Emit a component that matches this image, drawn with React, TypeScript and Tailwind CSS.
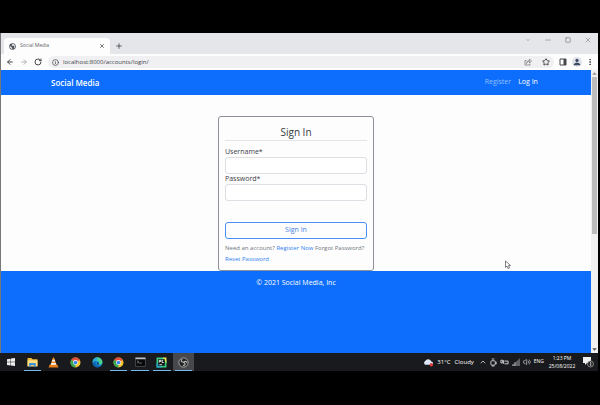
import type { ReactNode } from "react";
import { X, Plus, ArrowLeft, ArrowRight, RotateCw, Info, Star, Minus, Square, ChevronDown, ChevronUp, EllipsisVertical, Volume2 } from "lucide-react";

const font = "font-['Open_Sans','Noto_Sans',sans-serif]";

function IconButton({ label, className = "", children }: { label: string; className?: string; children: ReactNode }) {
  return (
    <button type="button" aria-label={label} className={`flex shrink-0 items-center justify-center ${className}`}>
      {children}
    </button>
  );
}

function Globe() {
  return (
    <svg viewBox="0 0 16 16" className="size-[7px] shrink-0">
      <circle cx="8" cy="8" r="7.5" fill="#50555b" />
      <path d="M2 7l4 2 1 3 1 2-3-1-3-3zM8 2l-2 3 3 2 2-1 2 3-2 2 1 2 2-4-1-5-3-2z" fill="#e8eaed" />
    </svg>
  );
}

function TabStrip() {
  return (
    <div className="flex h-[21px] items-end bg-[#e4e6ea] pl-[3px]">
      <div className="flex h-4 w-[106px] items-center gap-1 rounded-t bg-[#fdfdfd] pr-1 pl-[5px]">
        <Globe />
        <span className="flex-1 text-[5px] text-[#5f6368]">Social Media</span>
        <IconButton label="Close tab" className="size-2 text-[#45494d]"><X className="size-1.5" strokeWidth={3} /></IconButton>
      </div>
      <IconButton label="New tab" className="h-4 w-[18px] text-[#45494d]"><Plus className="size-2" strokeWidth={2.5} /></IconButton>
      <div className="ml-auto flex h-full items-start gap-3 pt-[3px] pr-[6px] text-[#85888c]">
        <IconButton label="Search tabs" className="size-2"><ChevronDown className="size-1.5" /></IconButton>
        <IconButton label="Minimize" className="size-2"><Minus className="size-2" /></IconButton>
        <IconButton label="Maximize" className="size-2"><Square className="size-1.5" strokeWidth={3} /></IconButton>
        <IconButton label="Close" className="size-2"><X className="size-2" strokeWidth={2} /></IconButton>
      </div>
    </div>
  );
}

function Toolbar() {
  return (
    <div className="flex h-4 items-center bg-[#fdfdfd] pr-1 pl-[5px] text-[#45494d]">
      <div className="flex gap-1.5">
        <IconButton label="Back" className="size-2"><ArrowLeft className="size-2" strokeWidth={3} /></IconButton>
        <IconButton label="Forward" className="size-2 text-[#a5a8ab]"><ArrowRight className="size-2" strokeWidth={2.5} /></IconButton>
        <IconButton label="Reload" className="size-2"><RotateCw className="size-2" strokeWidth={3} /></IconButton>
      </div>
      <div className="ml-[6px] flex h-3 min-w-0 flex-1 items-center gap-1 rounded-full bg-[#f0f0f2] px-1">
        <Info className="size-[7px] shrink-0" strokeWidth={2.5} />
        <input aria-label="Address" defaultValue="localhost:8000/accounts/login/" className="h-3 min-w-0 flex-1 bg-transparent text-[6px] text-[#40444a] outline-none" />
        <IconButton label="Share" className="mr-1.5 size-2 text-[#7b7f84]">
          <svg viewBox="0 0 16 16" className="size-2" fill="none" stroke="currentColor" strokeWidth="1.6"><path d="M5 5H2v9h10v-3M5 11c0-4 3-6 6-6V2l4 4-4 4V7c-3 0-5 2-6 4z" /></svg>
        </IconButton>
        <IconButton label="Bookmark" className="size-2"><Star className="size-2" strokeWidth={3} /></IconButton>
      </div>
      <IconButton label="Side panel" className="ml-[5px] size-2">
        <svg viewBox="0 0 16 16" className="size-2"><path d="M2 2h12v12H2z" fill="none" stroke="currentColor" strokeWidth="2" /><path d="M9 2h5v12H9z" fill="currentColor" /></svg>
      </IconButton>
      <IconButton label="Profile" className="ml-[5px] size-[10px] rounded-full bg-[#dfe3ea]">
        <svg viewBox="0 0 10 10" className="size-2"><circle cx="5" cy="3" r="2" fill="#3c4963" /><path d="M1 9V7.5Q5 3.5 9 7.5V9z" fill="#3c4963" /></svg>
      </IconButton>
      <IconButton label="Menu" className="ml-1 size-2"><EllipsisVertical className="size-2" strokeWidth={3} /></IconButton>
    </div>
  );
}

function Field({ id, label, type }: { id: string; label: string; type: string }) {
  return (
    <div>
      <label htmlFor={id} className="block text-[7px] leading-[10px] text-[#3c4146]">{label}</label>
      <input id={id} type={type} className="block h-[17px] w-full rounded-[3px] border border-[#dcdfe3] bg-white px-1 text-[7px] outline-none" />
    </div>
  );
}

function LoginPage() {
  return (
    <div className="min-w-0 flex-1 bg-[#fefdfe]">
      <nav className="flex h-[25px] items-center bg-[#0d6efd] px-[9%] pl-[50px] text-[7px] text-white">
        <a href="#home" className="flex-1 text-[8px] font-semibold">Social Media</a>
        <a href="#register" className="mr-[7px] text-[#92bffe]">Register</a>
        <a href="#login">Log In</a>
      </nav>
      <main className="flex justify-center pt-[21px]">
        <form onSubmit={(e) => e.preventDefault()} className="w-[156px] rounded-[3px] border border-[#8d929a] px-[6px] pt-2 pb-[5px]">
          <fieldset>
            <legend className="mb-1.5 w-full border-b border-[#e3e5e8] text-center text-[10px] leading-[15px] text-[#343a40]">Sign In</legend>
            <Field id="username" label="Username*" type="text" />
            <Field id="password" label="Password*" type="password" />
          </fieldset>
          <button type="submit" className="mt-[21px] block h-[17px] w-full rounded-[3px] border border-[#4b8ff5] text-[7px] text-[#3d82e8]">Sign In</button>
          <p className="mt-1 text-[6px] leading-[11px] text-[#6c757d]">
            Need an account? <a href="#register" className="text-[#2f7fee]">Register Now</a> Forgot Password?{" "}
            <a href="#reset" className="text-[#2f7fee]">Reset Password</a>
          </p>
        </form>
      </main>
      <footer className="h-[82px] bg-[#0d6efd] pt-[7px] text-center text-[7px] leading-[10px] text-white">© 2021 Social Media, Inc</footer>
    </div>
  );
}

function ScrollBar() {
  return (
    <div className="flex w-[7px] flex-col items-center justify-between bg-[#f1f1f1]">
      <div className="flex w-full flex-col items-center">
        <svg viewBox="0 0 6 6" className="size-[7px]"><path d="M1 4l2-2 2 2z" fill="#909090" /></svg>
        <div className="h-[157px] w-[5px] bg-[#bdbdbd]" />
      </div>
      <svg viewBox="0 0 6 6" className="size-[7px]"><path d="M1 2l2 2 2-2z" fill="#505050" /></svg>
    </div>
  );
}

function Chrome() {
  return (
    <svg viewBox="0 0 20 20" className="size-[11px]">
      <circle cx="10" cy="10" r="9" fill="#f7c631" />
      <path d="M10 10L2.2 5.5A9 9 0 0 1 17.8 5.5z" fill="#e44d3d" />
      <path d="M10 10L2.2 5.5A9 9 0 0 0 10 19z" fill="#35a756" />
      <circle cx="10" cy="10" r="4.5" fill="#fff" /><circle cx="10" cy="10" r="3.4" fill="#3f83ed" />
    </svg>
  );
}

const apps: { name: string; open?: boolean; active?: boolean; icon: ReactNode }[] = [
  { name: "Start", icon: <svg viewBox="0 0 10 10" className="size-2"><path d="M0 1.5l4.5-.7v4H0zM5 .7l5-.7v4.8H5zM0 5.3h4.5v4L0 8.6zM5 5.3h5V10l-5-.7z" fill="#eee" /></svg> },
  { name: "File Explorer", open: true, icon: <svg viewBox="0 0 20 20" className="size-[11px]"><path d="M1 2h7l2 2h9v13H1z" fill="#f0b93f" /><path d="M1 6h18v11H1z" fill="#ffdf83" /><path d="M4 18v-7h12v7h-3v-3H7v3z" fill="#3e91d1" /></svg> },
  { name: "VLC", icon: <svg viewBox="0 0 20 20" className="size-[11px]"><path d="M3 14h14l2 5H1z" fill="#e77c16" /><path d="M9 1h2l5 15H4z" fill="#f58a1f" /><path d="M7.7 5h4.6l1 3H6.7zM5.7 11h8.6l1 3H4.7z" fill="#eee" /></svg> },
  { name: "Chrome", icon: <Chrome /> },
  { name: "Edge", icon: <svg viewBox="0 0 20 20" className="size-[11px]"><circle cx="10" cy="10" r="9" fill="#1688d4" /><path d="M1 9A9 9 0 0 1 19 10c0 4-5 4-7 3 2-3 0-6-4-6-3 0-6 1-7 2z" fill="#4bcf91" /><path d="M1 9A9 9 0 0 1 11 1c-2 3-2 5-3 6-3 0-6 1-7 2z" fill="#2aa9da" /><path d="M7 8c-3 5 1 9 9 8-5 5-14 2-14-5 1-2 3-3 5-3z" fill="#0c5fae" /><path d="M9 11c1-1 2-1 3 0 0 1-1 2 1 3-3 0-4-1-4-3z" fill="#191b20" /></svg> },
  { name: "Chrome login window", open: true, icon: <Chrome /> },
  { name: "Command Prompt", open: true, icon: <svg viewBox="0 0 20 18" className="h-[10px] w-[11px]"><path d="M1 1h18v16H1z" fill="#08090a" stroke="#6b7074" /><path d="M1 1h18v3H1z" fill="#b8bec2" /><path d="M4 7l3 2-3 2M8 11h4" stroke="#ddd" fill="none" /></svg> },
  { name: "PyCharm", open: true, icon: <svg viewBox="0 0 20 20" className="size-[11px]"><path d="M1 1h12l6 5v13H1z" fill="#37ce83" /><path d="M12 1h7v11z" fill="#e6e454" /><path d="M1 10v9h10z" fill="#25a6cb" /><path d="M4 4h12v12H4z" fill="#101616" /><path d="M6 10V6h3v2H6M13 6h-2v4h3M6 14h5" stroke="#fff" fill="none" strokeWidth="1.5" /></svg> },
  { name: "OBS Studio", open: true, active: true, icon: <svg viewBox="0 0 20 20" className="size-[11px]"><circle cx="10" cy="10" r="8.5" fill="#242426" stroke="#bbb" strokeWidth="1.5" /><path d="M10 9c-5 1-5-4-2-5M11 10c4 3 1 6-2 5M10 11c2-5 6-3 6 0" stroke="#b8b8b8" strokeWidth="2" fill="none" /></svg> },
];

function Taskbar() {
  return (
    <div className="mr-0.5 flex h-[18px] items-center bg-[#191a1d] text-[6px] text-white">
      <div className="flex h-full w-[194px]">
        {apps.map((app) => (
          <button key={app.name} type="button" aria-label={app.name} className={`relative flex h-full flex-1 items-center justify-center ${app.active ? "bg-[#47484b]" : ""}`}>
            {app.icon}
            {app.open && <span className="absolute inset-x-0.5 bottom-0 h-px bg-[#76b9ed]" />}
          </button>
        ))}
      </div>
      <div className="ml-auto flex items-center pr-1">
        <svg viewBox="0 0 20 18" className="h-[10px] w-3"><path d="M5 14a4 4 0 0 1 0-7 6 6 0 0 1 11 1 3 3 0 0 1 0 6z" fill="#dce7f6" /><circle cx="16" cy="14" r="3" fill="#e33b3b" /></svg>
        <span className="ml-[3px]">31°C</span><span className="ml-1">Cloudy</span>
        <div className="ml-[5px] flex items-center gap-[3px]">
          <ChevronUp className="size-2" />
          <svg viewBox="0 0 8 10" className="h-[9px] w-[7px]" fill="none" stroke="#ddd"><rect x="1" y="3" width="5" height="5" rx="1" /><path d="M2 1h3M2 9h3M7 4v3" /></svg>
          <svg viewBox="0 0 10 8" className="h-2 w-[9px]" fill="none" stroke="#ddd"><path d="M1 2h2v3H1zM4 2v4M5 3h4v3H5" /></svg>
          <svg viewBox="0 0 8 8" className="size-2"><path d="M0 8l8-8v8z" fill="#606164" /><path d="M1 8V6M3 8V4" stroke="#aaa" /></svg>
          <Volume2 className="size-2 text-[#ccc]" />
        </div>
        <span className="ml-[3px] text-[5px]">ENG</span>
        <div className="ml-1 w-[28px] text-center text-[5px] leading-2 whitespace-nowrap"><div>1:23 PM</div><div>25/08/2022</div></div>
        <svg viewBox="0 0 12 12" className="ml-[6px] size-3"><path d="M1 1h8v6H5L3 9V7H1z" fill="#eee" /><circle cx="8.5" cy="8" r="3" fill="#222" stroke="#aaa" strokeWidth=".7" /><path d="M8 7l.7-.6V10" stroke="#ddd" strokeWidth=".8" fill="none" /></svg>
      </div>
    </div>
  );
}

export default function App() {
  return (
    <div className={`relative min-h-screen bg-black py-[33px] ${font}`}>
      <div className="mr-0.5 border-l border-[#777]">
        <TabStrip />
        <Toolbar />
        <div className="flex"><LoginPage /><ScrollBar /></div>
      </div>
      <Taskbar />
      <svg viewBox="0 0 12 18" className="absolute top-[260px] left-[505px] h-[10px] w-[6px]"><path d="M1 1v13l3-3 2 5 3-1-2-5h4z" fill="#fff" stroke="#555" strokeWidth="1.5" /></svg>
    </div>
  );
}
